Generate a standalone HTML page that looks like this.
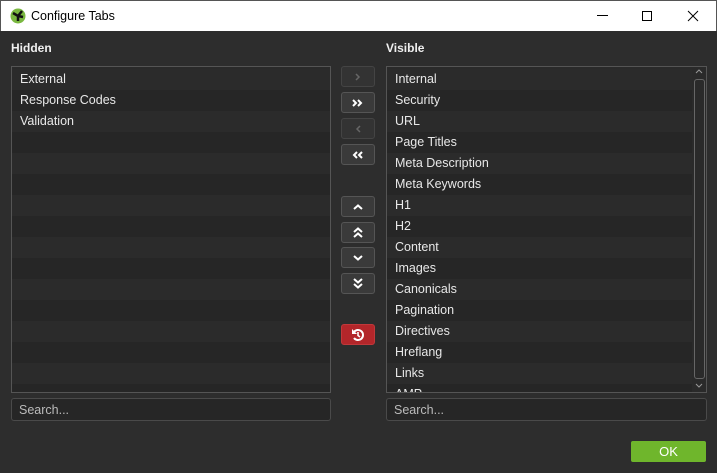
<!DOCTYPE html>
<html><head><style>
*{margin:0;padding:0;box-sizing:border-box}
body{width:717px;height:473px;background:#2d2d2d;font-family:"Liberation Sans",sans-serif;font-size:12.5px;color:#e8e8e8;position:relative;overflow:hidden}
.tb{position:absolute;left:0;top:0;width:717px;height:31px;background:#fff;color:#000;border:1px solid #555;border-bottom:none}
.tb .t{position:absolute;left:30px;top:8px;font-size:12.5px}
.lbl{position:absolute;top:41px;font-weight:bold;font-size:12px;color:#f0f0f0}
.list{position:absolute;top:66px;height:327px;border:1px solid #555;background:#2a2a2a;overflow:hidden}
.row{height:21px;line-height:21px;padding-left:8px;white-space:nowrap}
.row:nth-child(odd){background:#2b2b2b}
.row:nth-child(even){background:#262626}
.search{position:absolute;top:398px;height:23px;border:1px solid #4a4a4a;border-radius:3px;background:#262626;color:#bbb;padding-left:7px;line-height:22px}
.btn{position:absolute;left:341px;width:34px;height:21px;border:1px solid #555;border-radius:3px;background:#3a3a3a;color:#fff;display:flex;align-items:center;justify-content:center}
.btn.dis{background:#333;border-color:#444;color:#666}
.btn.red{background:#b3262a;border-color:#c0383a}
.ok{position:absolute;left:631px;top:441px;width:75px;height:21px;background:#6fb62c;border-radius:2px;color:#fff;text-align:center;line-height:21px;font-size:13px}
</style></head><body>
<div class="tb">
<svg style="position:absolute;left:9px;top:7px" width="16" height="16" viewBox="0 0 16 16"><circle cx="8" cy="8" r="7.5" fill="#7ab840"/><path d="M3 5 L8 8 L12 3 M8 8 L8 13 M8 8 L13 9" stroke="#111" stroke-width="2.5" fill="none"/></svg>
<span class="t">Configure Tabs</span>
<svg style="position:absolute;left:596px;top:14px" width="12" height="2"><rect width="11" height="1" fill="#000"/></svg>
<svg style="position:absolute;left:641px;top:10px" width="11" height="11"><rect x=".5" y=".5" width="9" height="9" fill="none" stroke="#000"/></svg>
<svg style="position:absolute;left:686px;top:9px" width="12" height="12"><path d="M1 1L11 11M11 1L1 11" stroke="#000"/></svg>
</div>
<div class="lbl" style="left:11px">Hidden</div>
<div class="lbl" style="left:386px">Visible</div>
<div class="list" style="left:11px;width:320px;padding-top:2px">
<div class="row">External</div><div class="row">Response Codes</div><div class="row">Validation</div>
<div class="row"></div><div class="row"></div><div class="row"></div><div class="row"></div><div class="row"></div><div class="row"></div><div class="row"></div><div class="row"></div><div class="row"></div><div class="row"></div><div class="row"></div><div class="row"></div><div class="row"></div>
</div>
<div class="list" style="left:386px;width:321px;padding-top:2px">
<div style="margin-right:14px">
<div class="row">Internal</div><div class="row">Security</div><div class="row">URL</div><div class="row">Page Titles</div><div class="row">Meta Description</div><div class="row">Meta Keywords</div><div class="row">H1</div><div class="row">H2</div><div class="row">Content</div><div class="row">Images</div><div class="row">Canonicals</div><div class="row">Pagination</div><div class="row">Directives</div><div class="row">Hreflang</div><div class="row">Links</div><div class="row">AMP</div>
</div>
<div style="position:absolute;right:1px;top:12px;width:11px;height:300px;border:1px solid #666;border-radius:3px"></div>
<svg style="position:absolute;right:3px;top:2px" width="8" height="6"><path d="M1 4L4 1L7 4" stroke="#999" fill="none"/></svg>
<svg style="position:absolute;right:3px;bottom:3px" width="8" height="6"><path d="M1 1L4 4L7 1" stroke="#999" fill="none"/></svg>
</div>
<div class="search" style="left:11px;width:320px">Search...</div>
<div class="search" style="left:386px;width:321px">Search...</div>
<div class="btn dis" style="top:66px"><svg width="8" height="8"><path d="M2 1L5 4L2 7" stroke="#666" stroke-width="1.5" fill="none"/></svg></div>
<div class="btn" style="top:92px"><svg width="12" height="8"><path d="M1 1L4 4L1 7M6 1L9 4L6 7" stroke="#fff" stroke-width="2" fill="none"/></svg></div>
<div class="btn dis" style="top:118px"><svg width="8" height="8"><path d="M6 1L3 4L6 7" stroke="#666" stroke-width="1.5" fill="none"/></svg></div>
<div class="btn" style="top:144px"><svg width="12" height="8"><path d="M5 1L2 4L5 7M10 1L7 4L10 7" stroke="#fff" stroke-width="2" fill="none"/></svg></div>
<div class="btn" style="top:196px"><svg width="10" height="6"><path d="M1 5L5 1.5L9 5" stroke="#fff" stroke-width="2" fill="none"/></svg></div>
<div class="btn" style="top:222px"><svg width="10" height="11"><path d="M1 5L5 1.5L9 5M1 10L5 6.5L9 10" stroke="#fff" stroke-width="2" fill="none"/></svg></div>
<div class="btn" style="top:247px"><svg width="10" height="6"><path d="M1 1L5 4.5L9 1" stroke="#fff" stroke-width="2" fill="none"/></svg></div>
<div class="btn" style="top:273px"><svg width="10" height="11"><path d="M1 1L5 4.5L9 1M1 6L5 9.5L9 6" stroke="#fff" stroke-width="2" fill="none"/></svg></div>
<div class="btn red" style="top:324px"><svg width="14" height="14" viewBox="0 0 14 14"><path d="M3 4A5 5 0 1 1 3 10" stroke="#fff" stroke-width="2" fill="none"/><path d="M1 1L1 6L6 6Z" fill="#fff"/><path d="M7 4V7.5L9 9" stroke="#fff" stroke-width="1.6" fill="none"/></svg></div>
<div class="ok">OK</div>
</body></html>
